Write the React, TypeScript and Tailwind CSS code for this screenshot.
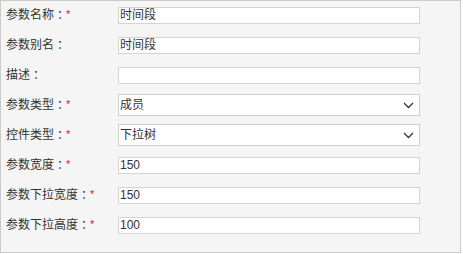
const FONT = { fontFamily: '"Liberation Sans", "Noto Sans CJK SC", sans-serif' }

type Field = {
  label: string
  required?: boolean
  value: string
  kind: 'input' | 'select'
}

const fields: Field[] = [
  { label: '参数名称', required: true, value: '时间段', kind: 'input' },
  { label: '参数别名', value: '时间段', kind: 'input' },
  { label: '描述', value: '', kind: 'input' },
  { label: '参数类型', required: true, value: '成员', kind: 'select' },
  { label: '控件类型', required: true, value: '下拉树', kind: 'select' },
  { label: '参数宽度', required: true, value: '150', kind: 'input' },
  { label: '参数下拉宽度', required: true, value: '150', kind: 'input' },
  { label: '参数下拉高度', required: true, value: '100', kind: 'input' },
]

function Chevron() {
  return (
    <svg width="11" height="7" viewBox="0 0 11 7" className="shrink-0">
      <polyline points="1,1 5.5,5.5 10,1" fill="none" stroke="#333" strokeWidth="1.3" />
    </svg>
  )
}

export default function App() {
  return (
    <div
      lang="zh-CN"
      className="w-[461px] h-[253px] bg-[#f5f5f5] shadow-[inset_0_0_0_1px_#cacaca] text-[12px] text-[#333]"
      style={FONT}
    >
      {fields.map((f) => (
        <div key={f.label} className="flex items-center h-[30px]">
          <div className="w-[118px] pl-[6px] flex items-center whitespace-nowrap">
            <span>{f.label}</span>
            {/* colon centred in its cell, as in the original */}
            <span className="font-['Noto_Sans_CJK_TC',sans-serif]">：</span>
            {f.required && <span className="text-[#e02020] text-[11px] -mt-[2px]">*</span>}
          </div>
          {f.kind === 'input' ? (
            <div className="w-[302px] h-[17px] bg-white border border-[#d4d4d4] flex items-center pl-[1px] leading-none">
              {f.value}
            </div>
          ) : (
            <div className="w-[302px] h-[22px] bg-white border border-[#cfcfcf] flex items-center justify-between pl-[1px] pr-[5px] leading-none">
              <span>{f.value}</span>
              <Chevron />
            </div>
          )}
        </div>
      ))}
    </div>
  )
}
